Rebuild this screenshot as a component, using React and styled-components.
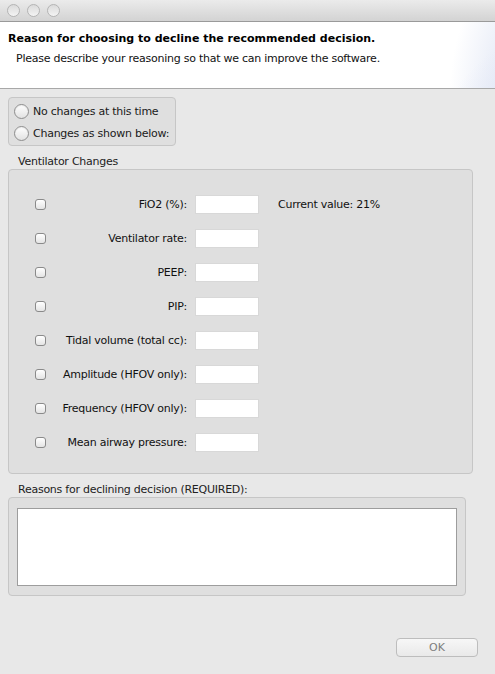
import React, { useState } from "react";
import styled, { createGlobalStyle } from "styled-components";

const GlobalStyle = createGlobalStyle`
  html, body {
    margin: 0;
    padding: 0;
    background: #e8e8e8;
  }
  body {
    font-family: "DejaVu Sans", "Liberation Sans", sans-serif;
    font-size: 11px;
    letter-spacing: -0.25px;
    color: #1a1a1a;
  }
`;

const Window = styled.div`
  width: 495px;
  height: 674px;
  display: flex;
  flex-direction: column;
  background: #e8e8e8;
  overflow: hidden;
`;

const TitleBar = styled.div`
  height: 21px;
  flex-shrink: 0;
  display: flex;
  align-items: center;
  gap: 7px;
  padding-left: 7px;
  background: linear-gradient(#ebebeb, #d3d3d3);
  border-bottom: 1px solid #9a9a9a;
`;

const Light = styled.span`
  width: 11px;
  height: 11px;
  border-radius: 50%;
  border: 1px solid #b4b4b4;
  background: linear-gradient(#dadada, #f4f4f4);
`;

const Header = styled.div`
  height: 67px;
  flex-shrink: 0;
  padding: 10px 0 0 8px;
  box-sizing: border-box;
  background:
    radial-gradient(ellipse 150px 120px at 590px 120px, #dae1f3 55%, rgba(226, 231, 246, 0.6) 70%, rgba(255, 255, 255, 0) 100%),
    radial-gradient(ellipse 120px 160px at 570px 70px, #e4e9f6 55%, rgba(255, 255, 255, 0) 100%),
    #ffffff;
  border-bottom: 1px solid #a8a8a8;
`;

const Title = styled.div`
  font-weight: bold;
  font-size: 11px;
  letter-spacing: 0;
  color: #000;
`;

const Subtitle = styled.div`
  margin: 7px 0 0 8px;
  font-size: 11px;
  color: #111;
`;

const Body = styled.div`
  flex: 1;
  display: flex;
  flex-direction: column;
  padding: 8px 0 0 8px;
`;

const GroupBox = styled.div`
  background: #dfdfdf;
  border: 1px solid #c6c6c6;
  border-radius: 4px;
  box-sizing: border-box;
  width: ${(p) => p.$width}px;
`;

const RadioBox = styled(GroupBox)`
  display: flex;
  flex-direction: column;
  gap: 6px;
  padding: 5px 0 4px 5px;
`;

const RadioRow = styled.label`
  display: flex;
  align-items: center;
  gap: 4px;
  height: 16px;
`;

const RadioCircle = styled.span`
  width: 13px;
  height: 13px;
  border-radius: 50%;
  border: 1px solid #8e8e8e;
  background: linear-gradient(#ffffff, #e2e2e2);
  box-shadow: inset 0 1px 1px rgba(0, 0, 0, 0.08);
`;

const SectionLabel = styled.div`
  margin: 9px 0 1px 10px;
  height: 13px;
  color: #222;
`;

const VentBox = styled(GroupBox)`
  height: 305px;
  padding: 25px 0 0 26px;
  display: flex;
  flex-direction: column;
  gap: 15px;
`;

const FieldRow = styled.div`
  display: flex;
  align-items: center;
  height: 19px;
`;

const Check = styled.span`
  width: 9px;
  height: 9px;
  border-radius: 3px;
  border: 1px solid #8a8a8a;
  background: linear-gradient(#ffffff, #e4e4e4);
  flex-shrink: 0;
`;

const FieldLabel = styled.span`
  width: 141px;
  text-align: right;
  padding-right: 8px;
  color: #111;
`;

const TextField = styled.input`
  width: 64px;
  height: 19px;
  box-sizing: border-box;
  border: 1px solid #d8d8d8;
  background: #fff;
  padding: 0 3px;
  font: inherit;
  outline: none;
`;

const Note = styled.span`
  margin-left: 19px;
  color: #111;
`;

const ReasonBox = styled(GroupBox)`
  height: 99px;
  padding: 10px 8px 0 8px;
`;

const ReasonArea = styled.textarea`
  display: block;
  width: 100%;
  height: 78px;
  box-sizing: border-box;
  border: 1px solid #9d9d9d;
  background: #fff;
  resize: none;
  font: inherit;
  outline: none;
`;

const Footer = styled.div`
  margin-top: auto;
  display: flex;
  justify-content: flex-end;
  padding: 0 17px 17px 0;
`;

const OkButton = styled.button`
  width: 82px;
  height: 19px;
  border: 1px solid #bdbdbd;
  border-radius: 4px;
  background: linear-gradient(#f7f7f7, #e9e9e9);
  color: #7e7e7e;
  font: inherit;
  font-size: 11px;
  padding: 0;
`;

const fields = [
  { label: "FiO2 (%):", note: "Current value: 21%" },
  { label: "Ventilator rate:" },
  { label: "PEEP:" },
  { label: "PIP:" },
  { label: "Tidal volume (total cc):" },
  { label: "Amplitude (HFOV only):" },
  { label: "Frequency (HFOV only):" },
  { label: "Mean airway pressure:" },
];

const App = () => {
  const [reason, setReason] = useState("");

  return (
    <Window>
      <GlobalStyle />
      <TitleBar>
        <Light />
        <Light />
        <Light />
      </TitleBar>
      <Header>
        <Title>Reason for choosing to decline the recommended decision.</Title>
        <Subtitle>
          Please describe your reasoning so that we can improve the software.
        </Subtitle>
      </Header>
      <Body>
        <RadioBox $width={168}>
          <RadioRow>
            <RadioCircle />
            No changes at this time
          </RadioRow>
          <RadioRow>
            <RadioCircle />
            Changes as shown below:
          </RadioRow>
        </RadioBox>

        <SectionLabel>Ventilator Changes</SectionLabel>
        <VentBox $width={465}>
          {fields.map((f) => (
            <FieldRow key={f.label}>
              <Check />
              <FieldLabel>{f.label}</FieldLabel>
              <TextField type="text" />
              {f.note && <Note>{f.note}</Note>}
            </FieldRow>
          ))}
        </VentBox>

        <SectionLabel>Reasons for declining decision (REQUIRED):</SectionLabel>
        <ReasonBox $width={458}>
          <ReasonArea value={reason} onChange={(e) => setReason(e.target.value)} />
        </ReasonBox>

        <Footer>
          <OkButton>OK</OkButton>
        </Footer>
      </Body>
    </Window>
  );
};

export default App;
